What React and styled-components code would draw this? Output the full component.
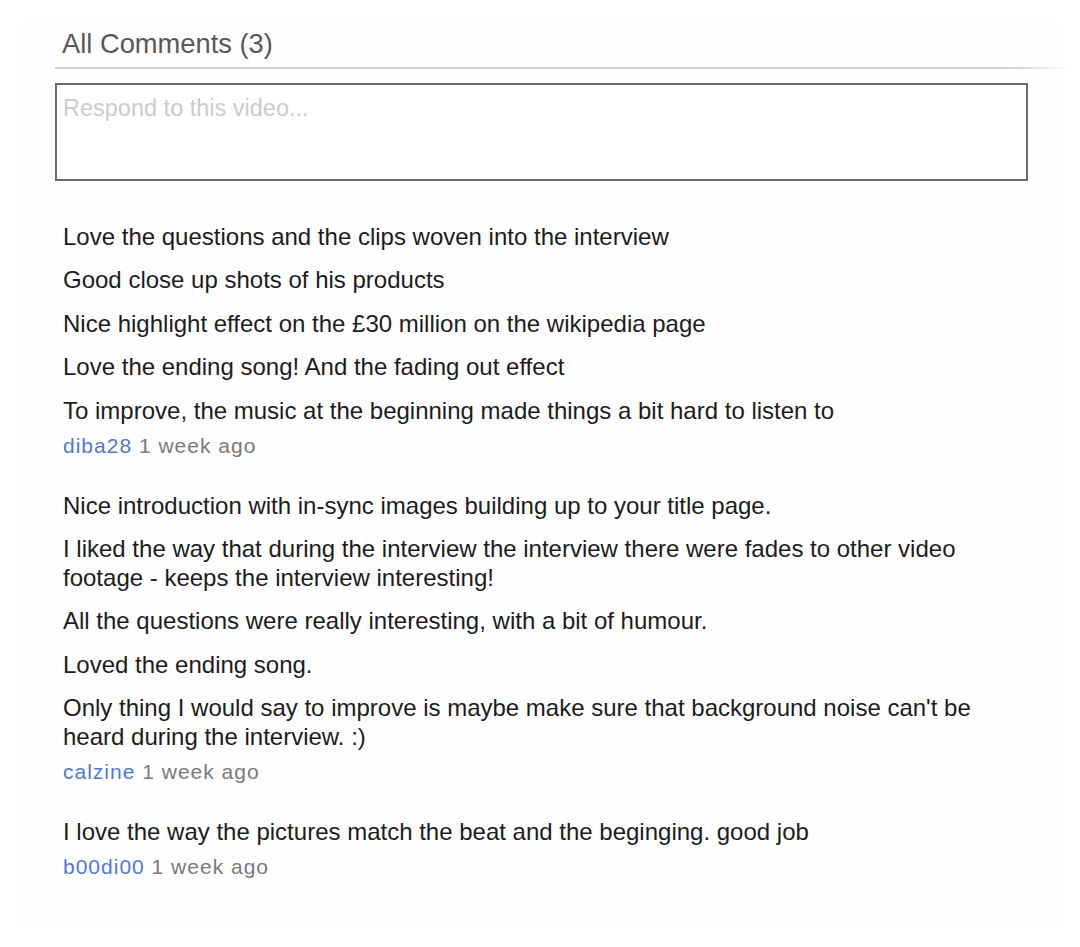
import React from "react";
import styled, { createGlobalStyle } from "styled-components";

const Global = createGlobalStyle`
  html, body { margin: 0; padding: 0; background: #ffffff; }
  body { font-family: "Liberation Sans", Arial, sans-serif; }
`;

const Page = styled.div`
  width: 1080px;
  height: 947px;
  padding: 20px 20px 0 20px;
  box-sizing: border-box;
`;

const Panel = styled.section`
  height: 905px;
  box-sizing: border-box;
  padding: 8px 0 0 35px;
  border-radius: 14px;
  background: #fefefe;
  box-shadow: 0 0 8px rgba(0, 0, 0, 0.02);
`;

const Title = styled.h2`
  margin: 0 0 7px 7px;
  font-size: 27.3px;
  line-height: 32px;
  font-weight: normal;
  color: #585858;
`;

const Divider = styled.div`
  height: 2px;
  margin-right: -10px;
  background: linear-gradient(to right, #d2d2d2 0%, #d2d2d2 94%, rgba(210, 210, 210, 0) 100%);
`;

const Respond = styled.textarea`
  display: block;
  width: 973px;
  height: 98px;
  margin-top: 14px;
  box-sizing: border-box;
  border: 2px solid #6a6a6a;
  padding: 9px 6px;
  resize: none;
  outline: none;
  font-family: "Liberation Sans", Arial, sans-serif;
  font-size: 23.5px;
  line-height: 28px;
  color: #222;
  background: #fff;
  &::placeholder { color: #cbcbcb; }
`;

const List = styled.div`
  width: 940px;
  margin: 41px 0 0 8px;
  display: flex;
  flex-direction: column;
  gap: 33px;
`;

const Comment = styled.article`
  display: flex;
  flex-direction: column;
`;

const Line = styled.p`
  margin: 0 0 14.4px 0;
  font-size: 24px;
  line-height: 29px;
  color: #1c1c1c;
  &:last-of-type { margin-bottom: 0; }
`;

const Meta = styled.div`
  margin-top: 8px;
  font-size: 21px;
  line-height: 25px;
  letter-spacing: 1px;
  color: #7a7a7a;
`;

const Author = styled.a`
  color: #5178d8;
  text-decoration: none;
`;

const comments = [
  {
    lines: [
      "Love the questions and the clips woven into the interview",
      "Good close up shots of his products",
      "Nice highlight effect on the £30 million on the wikipedia page",
      "Love the ending song! And the fading out effect",
      "To improve, the music at the beginning made things a bit hard to listen to",
    ],
    author: "diba28",
    when: "1 week ago",
  },
  {
    lines: [
      "Nice introduction with in-sync images building up to your title page.",
      "I liked the way that during the interview the interview there were fades to other video footage - keeps the interview interesting!",
      "All the questions were really interesting, with a bit of humour.",
      "Loved the ending song.",
      "Only thing I would say to improve is maybe make sure that background noise can't be heard during the interview. :)",
    ],
    author: "calzine",
    when: "1 week ago",
  },
  {
    lines: ["I love the way the pictures match the beat and the beginging. good job"],
    author: "b00di00",
    when: "1 week ago",
  },
];

export default function App() {
  return (
    <Page>
      <Global />
      <Panel>
        <Title>All Comments (3)</Title>
        <Divider />
        <Respond placeholder="Respond to this video..." />
        <List>
          {comments.map((c) => (
            <Comment key={c.author}>
              {c.lines.map((l, i) => (
                <Line key={i}>{l}</Line>
              ))}
              <Meta>
                <Author href="#">{c.author}</Author> {c.when}
              </Meta>
            </Comment>
          ))}
        </List>
      </Panel>
    </Page>
  );
}
